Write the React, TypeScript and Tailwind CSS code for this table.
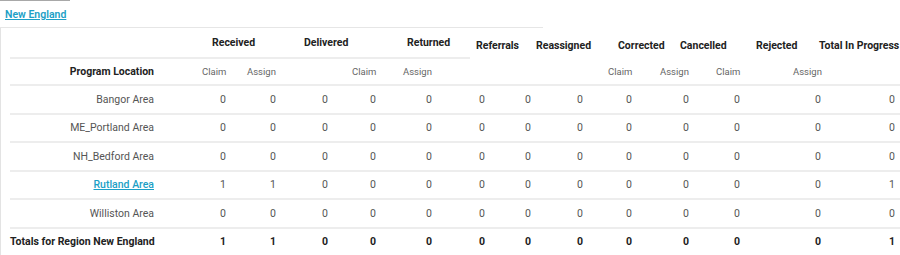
import React from 'react';

const COLS = [71, 50, 52, 48, 56, 53, 46, 52, 49, 57, 51, 81, 74];

interface Row {
  label: string;
  values: number[];
  link?: boolean;
}

const ROWS: Row[] = [
  { label: 'Bangor Area', values: [0, 0, 0, 0, 0, 0, 0, 0, 0, 0, 0, 0, 0] },
  { label: 'ME_Portland Area', values: [0, 0, 0, 0, 0, 0, 0, 0, 0, 0, 0, 0, 0] },
  { label: 'NH_Bedford Area', values: [0, 0, 0, 0, 0, 0, 0, 0, 0, 0, 0, 0, 0] },
  { label: 'Rutland Area', values: [1, 1, 0, 0, 0, 0, 0, 0, 0, 0, 0, 0, 1], link: true },
  { label: 'Williston Area', values: [0, 0, 0, 0, 0, 0, 0, 0, 0, 0, 0, 0, 0] },
];

const TOTALS = [1, 1, 0, 0, 0, 0, 0, 0, 0, 0, 0, 0, 1];

// header labels, [label, cell width from its left edge, sits lower]
const GROUPS: [string, number, boolean][] = [
  ['Received', 92, false],
  ['Delivered', 103, false],
  ['Returned', 69, false],
  ['Referrals', 60, true],
  ['Reassigned', 82, true],
  ['Corrected', 62, true],
  ['Cancelled', 76, true],
  ['Rejected', 63, true],
  ['Total In Progress', 81, true],
];

const SUBS: [string, number][] = [
  ['Claim', 45],
  ['Assign', 105],
  ['Claim', 51],
  ['Assign', 205],
  ['Claim', 52],
  ['Assign', 56],
  ['Claim', 77],
  ['Assign', 107],
];

const DataRow: React.FC<{ row: Row }> = ({ row }) => (
  <div className="flex h-[28.5px] border-t-2 border-[#ededed] items-center text-[#555]">
    <div className="w-[150px] shrink-0 pr-[6px] text-right whitespace-nowrap">
      {row.link ? (
        <a href="#" className="text-[#1c9fc6] underline font-medium">{row.label}</a>
      ) : row.label}
    </div>
    {row.values.map((v, i) => (
      <div key={i} style={{ width: COLS[i] }} className="shrink-0 pr-[5px] text-right">{v}</div>
    ))}
  </div>
);

export default function App() {
  return (
    <div className="w-[900px] h-[255px] overflow-hidden bg-white text-[10.5px] leading-[13px] font-['Roboto',sans-serif]">
      <div className="w-[70px] h-[27px] border-t border-[#a8a8a8] pl-[5px] pt-[7px]">
        <a href="#" className="text-[#1c9fc6] underline font-semibold whitespace-nowrap">New England</a>
      </div>
      <div className="w-[543px] border-t border-[#e6e6e6]" />
      <div className="border-l border-[#e3e3e3] pl-[9px]">
        <div className="flex h-[29px] text-[#222] font-bold">
          <div className="w-[202px] shrink-0" />
          {GROUPS.map(([label, w, low]) => (
            <div key={label} style={{ width: w }} className={`shrink-0 whitespace-nowrap ${low ? 'pt-[11px]' : 'pt-[8px]'}`}>
              {label}
            </div>
          ))}
        </div>
        <div className="w-[460px] border-t-2 border-[#ededed]" />
        <div className="flex h-[25px] items-center">
          <div className="w-[150px] shrink-0 pr-[6px] text-right font-bold text-[#222] whitespace-nowrap">Program Location</div>
          <div className="w-[42px] shrink-0" />
          {SUBS.map(([label, w], i) => (
            <div key={i} style={{ width: w }} className="shrink-0 text-[9.5px] text-[#666]">{label}</div>
          ))}
        </div>
        {ROWS.map(r => <DataRow key={r.label} row={r} />)}
        <div className="flex h-[28.5px] border-t-2 border-[#ededed] items-center font-bold text-[#222]">
          <div className="w-[150px] shrink-0 pr-[6px] text-right whitespace-nowrap">Totals for Region New England</div>
          {TOTALS.map((v, i) => (
            <div key={i} style={{ width: COLS[i] }} className="shrink-0 pr-[5px] text-right">{v}</div>
          ))}
        </div>
      </div>
    </div>
  );
}
